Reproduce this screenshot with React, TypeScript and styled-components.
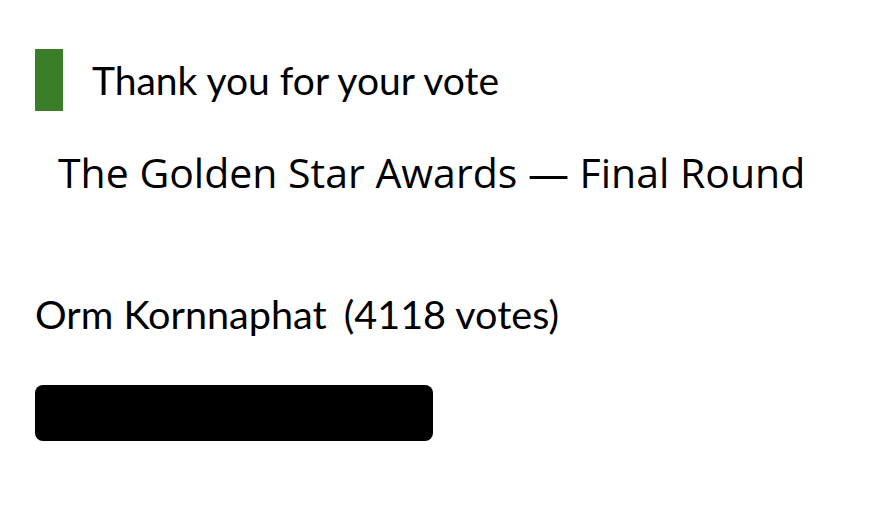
import * as React from "react"
import styled, { createGlobalStyle } from "styled-components"

const GlobalStyle = createGlobalStyle`
  html, body {
    margin: 0;
    padding: 0;
    background: #ffffff;
  }
`

const Page = styled.div`
  display: flex;
  flex-direction: column;
  align-items: flex-start;
  padding: 49px 35px 0 35px;
  font-family: Lato, "Liberation Sans", sans-serif;
  color: #000000;
`

const Header = styled.div`
  display: flex;
  align-items: center;
  gap: 29px;
`

const Accent = styled.div`
  width: 28px;
  height: 62px;
  background: #3a7d28;
`

const Heading = styled.h1`
  margin: 0;
  font-size: 39px;
  font-weight: 400;
  line-height: 1.2;
`

const Title = styled.h2`
  margin: 36px 0 0 23px;
  font-family: "Open Sans", sans-serif;
  font-size: 41px;
  font-weight: 400;
  line-height: 50px;
`

const Result = styled.div`
  display: flex;
  gap: 17px;
  margin-top: 93px;
  font-size: 39.6px;
  line-height: 1.2;
`

const Bar = styled.div<{ $width: number }>`
  width: ${(p) => p.$width}px;
  height: 56px;
  margin-top: 47px;
  border-radius: 8px;
  background: #000000;
`

interface IResult {
  name: string
  votes: number
}

const result: IResult = { name: "Orm Kornnaphat", votes: 4118 }

const App = () => {
  return (
    <>
      <GlobalStyle />
      <Page>
        <Header>
          <Accent />
          <Heading>Thank you for your vote</Heading>
        </Header>
        <Title>The Golden Star Awards — Final Round</Title>
        <Result>
          <span>{result.name}</span>
          <span>({result.votes} votes)</span>
        </Result>
        <Bar $width={398} />
      </Page>
    </>
  )
}

export default App
